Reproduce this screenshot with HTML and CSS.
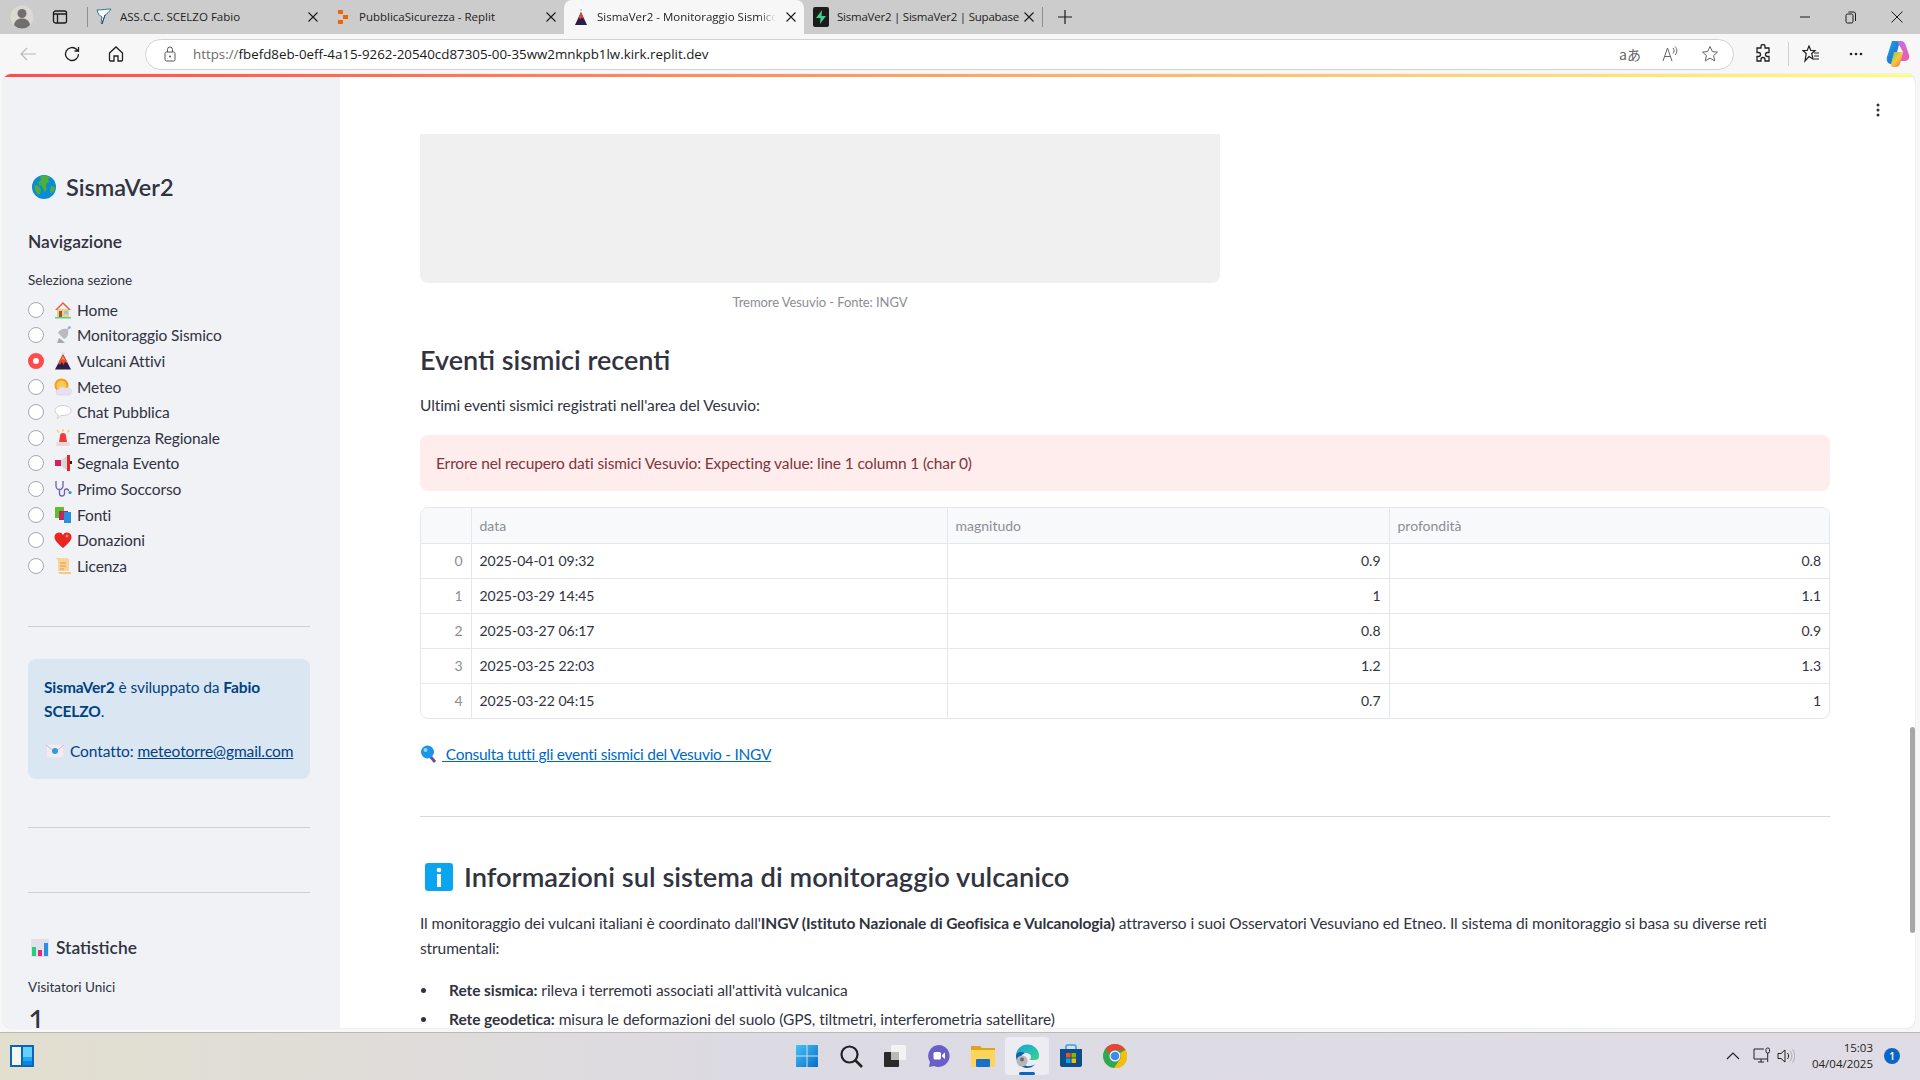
FILE: index.html
```html
<!DOCTYPE html>
<html>
<head>
    <title>SismaVer2 - Monitoraggio Sismico</title>
    <link rel="stylesheet" href="styles.css">
</head>
<body>
    <div class="tabstrip">
        <div class="profile">
            <svg width="24" height="24" viewBox="0 0 24 24"><circle cx="12" cy="12" r="11.500" fill="#dcd9d4"/><circle cx="12" cy="8.500" r="4.500" fill="#6f6f6f"/><path d="M4 20c1-5 4-6.500 8-6.500s7 1.500 8 6.500c-2 2.500-5 3.500-8 3.500s-6-1-8-3.500z" fill="#6f6f6f"/></svg>
        </div>
        <div class="tab-actions">
            <svg width="16" height="16" viewBox="0 0 16 16"><rect x="1.500" y="2" width="13" height="12" rx="2" fill="none" stroke="#1a1a1a" stroke-width="1.300"/><path d="M1.500 5h13M5.500 5v9" stroke="#1a1a1a" stroke-width="1.300"/></svg>
        </div>
        <div class="tab-sep first"></div>
        <div class="tab">
            <svg class="favicon" width="16" height="18" viewBox="0 0 16 18"><path d="M1 2c5 0 10-1 14-1-2 3-4 5-6 6l-3 9-1-1 1-6C4 8 2 6 1 2z" fill="#fff" stroke="#2f6f9f"/><path d="M9 7L6 16" stroke="#1f4f7f"/></svg>
            <span class="tab-title">ASS.C.C. SCELZO Fabio</span>
            <svg class="tab-close" width="10" height="10" viewBox="0 0 10 10"><path d="M0.500 0.500l9 9M9.500 0.500l-9 9" stroke="#1a1a1a" stroke-width="1.100"/></svg>
        </div>
        <div class="tab">
            <svg class="favicon" width="16" height="16" viewBox="0 0 16 16"><rect x="3" y="1" width="5" height="4" fill="#f26207"/><rect x="8" y="6" width="5" height="4" fill="#f26207"/><rect x="3" y="11" width="5" height="4" fill="#f26207"/></svg>
            <span class="tab-title">PubblicaSicurezza - Replit</span>
            <svg class="tab-close" width="10" height="10" viewBox="0 0 10 10"><path d="M0.500 0.500l9 9M9.500 0.500l-9 9" stroke="#1a1a1a" stroke-width="1.100"/></svg>
        </div>
        <div class="tab active">
            <svg class="favicon" width="16" height="18" viewBox="0 0 16 18"><path d="M8 4l6 13H2z" fill="#2b1d4a"/><path d="M8 4l3 7-2.500-1.500-1 2-1.500-2-1 1z" fill="#e4452e"/><path d="M7 1h2v2H7z" fill="#ccc"/></svg>
            <span class="tab-title">SismaVer2 - Monitoraggio Sismico</span>
            <svg class="tab-close" width="10" height="10" viewBox="0 0 10 10"><path d="M0.500 0.500l9 9M9.500 0.500l-9 9" stroke="#1a1a1a" stroke-width="1.100"/></svg>
        </div>
        <div class="tab">
            <svg class="favicon" width="16" height="20" viewBox="0 0 16 20"><rect width="16" height="20" rx="2" fill="#1c1c1c"/><path d="M9 3L3 11h4.500L7 17l6-8H8.500z" fill="#3ecf8e"/></svg>
            <span class="tab-title tight">SismaVer2 | SismaVer2 | Supabase</span>
            <svg class="tab-close" width="10" height="10" viewBox="0 0 10 10"><path d="M0.500 0.500l9 9M9.500 0.500l-9 9" stroke="#1a1a1a" stroke-width="1.100"/></svg>
        </div>
        <div class="tab-sep"></div>
        <svg class="new-tab" width="14" height="14" viewBox="0 0 14 14"><path d="M7 0v14M0 7h14" stroke="#1a1a1a" stroke-width="1.200"/></svg>
        <div class="window-controls">
            <div class="win-btn"><svg width="10" height="10" viewBox="0 0 10 10"><path d="M0 5h10" stroke="#1a1a1a"/></svg></div>
            <div class="win-btn"><svg width="12" height="14" viewBox="0 0 12 14"><rect x="1" y="4" width="7" height="9" rx="1.500" fill="none" stroke="#1a1a1a"/><path d="M3.500 2h5a2 2 0 0 1 2 2v7" fill="none" stroke="#1a1a1a"/></svg></div>
            <div class="win-btn"><svg width="12" height="12" viewBox="0 0 12 12"><path d="M0.500 0.500l11 11M11.500 0.500l-11 11" stroke="#1a1a1a"/></svg></div>
        </div>
    </div>

    <div class="toolbar">
        <div class="tool-btn"><svg width="18" height="18" viewBox="0 0 18 18"><path d="M17 9H2M8 3L2 9l6 6" fill="none" stroke="#b9b9b9" stroke-width="1.200"/></svg></div>
        <div class="tool-btn"><svg width="18" height="18" viewBox="0 0 18 18"><path d="M15.500 9a6.500 6.500 0 1 1-2-4.700L15.500 6V2M15.500 6h-4" fill="none" stroke="#1f1f1f" stroke-width="1.300"/></svg></div>
        <div class="tool-btn"><svg width="18" height="18" viewBox="0 0 18 18"><path d="M2.500 8L9 2l6.500 6v7a1 1 0 0 1-1 1H11v-5H7v5H3.500a1 1 0 0 1-1-1z" fill="none" stroke="#1f1f1f" stroke-width="1.300"/></svg></div>
        <div class="omnibox">
            <svg class="lock" width="16" height="16" viewBox="0 0 16 16"><rect x="3" y="6" width="10" height="9" rx="1.500" fill="none" stroke="#555"/><path d="M5.500 6V3.500a2.500 2.500 0 0 1 5 0V6" fill="none" stroke="#555"/><circle cx="8" cy="10.500" r="1" fill="#555"/></svg>
            <span class="url"><span class="url-scheme">https://</span>fbefd8eb-0eff-4a15-9262-20540cd87305-00-35ww2mnkpb1lw.kirk.replit.dev</span>
            <div class="omni-actions">
                <div class="omni-btn"><span class="translate-glyph">aあ</span></div>
                <div class="omni-btn"><svg width="18" height="18" viewBox="0 0 18 18"><path d="M2 16L6.500 3 11 16M3.500 11.500h6M12 3c1.500 1.500 1.500 4 0 5.500M14 1.500c2.500 2.500 2.500 6 0 8.500" fill="none" stroke="#666"/></svg></div>
                <div class="omni-btn"><svg width="18" height="18" viewBox="0 0 18 18"><path d="M9 1.500l2.300 5 5.200.600-3.900 3.500 1.100 5.300L9 13.200l-4.700 2.700 1.100-5.300L1.500 7.100l5.200-.600z" fill="none" stroke="#666"/></svg></div>
            </div>
        </div>
        <div class="tool-btn ext"><svg width="18" height="20" viewBox="0 0 18 20"><path d="M7 2.500a2 2 0 0 1 4 0V4h4v4.500h-1.500a2 2 0 0 0 0 4H15V17h-4v-1.500a2 2 0 0 0-4 0V17H3v-4.500h1.500a2 2 0 0 0 0-4H3V4h4z" fill="none" stroke="#1f1f1f" stroke-width="1.300"/></svg></div>
        <div class="tool-sep"></div>
        <div class="tool-btn fav"><svg width="18" height="20" viewBox="0 0 18 20"><path d="M7 2l1.800 4.500H13l-3.300 3L11 15l-4-2.500L3 17l1.200-7.500L1 6.500h4.200zM12 9h5M12 12h5M12 15h5" fill="none" stroke="#1f1f1f" stroke-width="1.200"/></svg></div>
        <div class="tool-btn more"><svg width="14" height="4" viewBox="0 0 14 4"><circle cx="2" cy="2" r="1.300" fill="#1f1f1f"/><circle cx="7" cy="2" r="1.300" fill="#1f1f1f"/><circle cx="12" cy="2" r="1.300" fill="#1f1f1f"/></svg></div>
        <div class="tool-btn copilot"><svg width="24" height="30" viewBox="0 0 24 30"><defs><linearGradient id="copA" x1="0" y1="0" x2="1" y2="1"><stop offset="0" stop-color="#19a7e8"/><stop offset="1" stop-color="#1d5fd0"/></linearGradient><linearGradient id="copB" x1="0" y1="0" x2="1" y2="1"><stop offset="0" stop-color="#c36bf0"/><stop offset="1" stop-color="#ef5fa0"/></linearGradient><linearGradient id="copC" x1="0" y1="0" x2="1" y2="1"><stop offset="0" stop-color="#76c93f"/><stop offset="0.500" stop-color="#f6c844"/><stop offset="1" stop-color="#f2603b"/></linearGradient></defs><path d="M6 2h8l-3 11-4 12H5c-3 0-5-3-4-7z" fill="url(#copA)"/><path d="M11 2h4c3 0 4 2 5 5l3 9c1 3-1 6-4 6h-5l3-9z" fill="url(#copB)"/><path d="M8 13h9l-3 12c-1 2-2 3-4 3H7c-2 0-3-2-2-3z" fill="url(#copC)"/></svg></div>
    </div>

    <div class="page">
        <div class="decoration"></div>
        <div class="page-body">
            <aside class="sidebar">
                <div class="brand">
                    <svg width="24" height="24" viewBox="0 0 24 24"><circle cx="12" cy="12" r="12" fill="#0a8bd6"/><path d="M8 1.500c3-1.500 7-1 10 1l-2 2.500 2 2-3 1-1 3 1 3-2 3-2-3-1-3-3-1-1-3 3-2z" fill="#4caf3a"/><path d="M2 10l5 1 2 4-1 4-2 1-3-5z" fill="#4caf3a"/><path d="M19 11l4 1-1 4-3 3-1-4z" fill="#4caf3a"/></svg>
                    <span>SismaVer2</span>
                </div>
                <h3 class="nav-title">Navigazione</h3>
                <div class="nav-label">Seleziona sezione</div>
                <ul class="radio-list">
                    <li class="radio-row"><span class="radio"></span><svg class="emoji" width="18" height="18" viewBox="0 0 18 18"><path d="M3 8h12v8H3z" fill="#f6c987"/><path d="M9 1L1 9h2l6-6 6 6h2z" fill="#ee5b3a"/><path d="M5 10h3v6H5z" fill="#8c5a3c"/><path d="M10 10h4v3h-4z" fill="#8ecae6"/><path d="M1 16h16v1.500H1z" fill="#4bd88f"/></svg>Home</li>
                    <li class="radio-row"><span class="radio"></span><svg class="emoji" width="18" height="18" viewBox="0 0 18 18"><path d="M4 7l6 6c3-1 5-4 4-9l2-3-1-.500-2 2.500C9 2 5 4 4 7z" fill="#b8bcc2"/><path d="M5 12l-2 5h8l-3-3z" fill="#a9a9a9"/><circle cx="15.500" cy="1.500" r="1.200" fill="#7fa8d8"/></svg>Monitoraggio Sismico</li>
                    <li class="radio-row checked"><span class="radio"></span><svg class="emoji" width="18" height="18" viewBox="0 0 18 18"><path d="M9 2l8 15.500H1z" fill="#2b1d4a"/><path d="M9 2l5 9.500-3-1.500-1.500 3-1.500-3-2 2.500-2-.500z" fill="#ee4a2d"/><path d="M9 4l2 4-2-1-2 1z" fill="#f7a13a"/><path d="M7.500 0h3v2.500h-3z" fill="#e8e4e0"/></svg>Vulcani Attivi</li>
                    <li class="radio-row"><span class="radio"></span><svg class="emoji" width="18" height="18" viewBox="0 0 18 18"><circle cx="7.500" cy="7.500" r="7" fill="#f59a1c"/><circle cx="7.500" cy="7.500" r="5" fill="#ffc94a"/><path d="M5 17a3 3 0 0 1 0-6c1-2.500 5-3 6.500-1 3-1 6 1 6 3.500S15 17 14 17z" fill="#e6e0f2" stroke="#cfc8de" stroke-width="0.500"/></svg>Meteo</li>
                    <li class="radio-row"><span class="radio"></span><svg class="emoji" width="18" height="18" viewBox="0 0 18 18"><path d="M9 2.500c4.500 0 8 2.200 8 5s-3.500 5-8 5H7l-3.500 3 .8-3.700C2.300 11 1 9.300 1 7.500c0-2.800 3.500-5 8-5z" fill="#fff" stroke="#cfcfcf"/></svg>Chat Pubblica</li>
                    <li class="radio-row"><span class="radio"></span><svg class="emoji" width="18" height="18" viewBox="0 0 18 18"><path d="M3 13h12l1 4H2z" fill="#e8d9d9"/><path d="M5 13l1-6a3 3 0 0 1 6 0l1 6z" fill="#ef3b3b"/><path d="M9 0v2.500M3 1l1.500 2.500M15 1l-1.500 2.500" stroke="#f7c948" stroke-width="1.300"/></svg>Emergenza Regionale</li>
                    <li class="radio-row"><span class="radio"></span><svg class="emoji" width="18" height="18" viewBox="0 0 18 18"><path d="M1 6h6v6H1z" fill="#d81e5b"/><path d="M7 6l6-4v14l-6-4z" fill="#d8d8dc"/><path d="M13 1h3v16h-3z" fill="#e8251f"/><path d="M16 7h2v3h-2z" fill="#222"/></svg>Segnala Evento</li>
                    <li class="radio-row"><span class="radio"></span><svg class="emoji" width="18" height="18" viewBox="0 0 18 18"><path d="M2 1v5a3.500 3.500 0 0 0 7 0V1M5.500 9.500v4a2.500 2.500 0 0 0 5 0V11a2 2 0 0 1 4 0" fill="none" stroke="#6a5fb0" stroke-width="1.300"/><circle cx="16" cy="12.500" r="1.600" fill="#2a8fe0"/></svg>Primo Soccorso</li>
                    <li class="radio-row"><span class="radio"></span><svg class="emoji" width="18" height="18" viewBox="0 0 18 18"><path d="M1 1h9v11H1z" fill="#5fbf2f"/><path d="M5 5h9v9H5z" fill="#b9295d"/><path d="M10 6h7v11h-7z" fill="#2a8fe0"/></svg>Fonti</li>
                    <li class="radio-row"><span class="radio"></span><svg class="emoji" width="18" height="18" viewBox="0 0 18 18"><path d="M9 17C3 12 .5 9 .5 6A4.500 4.500 0 0 1 9 4a4.500 4.500 0 0 1 8.500 2c0 3-2.500 6-8.500 11z" fill="#e8251f"/><circle cx="13" cy="5" r="1.500" fill="#f77"/></svg>Donazioni</li>
                    <li class="radio-row"><span class="radio"></span><svg class="emoji" width="18" height="18" viewBox="0 0 18 18"><path d="M1 1h11l3 1v12H4V3z" fill="#fbd39a"/><path d="M4 15h13v2H6z" fill="#f6c987"/><path d="M6 6h6M6 9h6M6 12h4" stroke="#e09a40"/></svg>Licenza</li>
                </ul>
                <hr class="side-rule first">
                <div class="info-box">
                    <p><strong>SismaVer2</strong> è sviluppato da <strong>Fabio SCELZO</strong>.</p>
                    <p class="contact"><svg class="emoji" width="18" height="14" viewBox="0 0 18 14"><rect width="18" height="14" rx="1" fill="#f1ebf3" stroke="#d5cbd8" stroke-width="0.500"/><path d="M0 1l9 7 9-7" fill="none" stroke="#c9bcd0"/><circle cx="9" cy="7" r="3" fill="#2a9fe0"/></svg> <span>Contatto: <a href="#">meteotorre@gmail.com</a></span></p>
                </div>
                <hr class="side-rule second">
                <hr class="side-rule third">
                <h3 class="stats-title"><svg width="18" height="18" viewBox="0 0 18 18"><rect width="18" height="18" rx="1" fill="#e3e0ea"/><path d="M1 8h4v9H1z" fill="#1fd080"/><path d="M7 11h4v6H7z" fill="#f0267a"/><path d="M13 4h4v13h-4z" fill="#2a8fe0"/></svg>Statistiche</h3>
                <div class="metric-label">Visitatori Unici</div>
                <div class="metric-value">1</div>
            </aside>

            <main class="content">
                <div class="menu-dots"><svg width="4" height="14" viewBox="0 0 4 14"><circle cx="2" cy="2" r="1.500" fill="#31333f"/><circle cx="2" cy="7" r="1.500" fill="#31333f"/><circle cx="2" cy="12" r="1.500" fill="#31333f"/></svg></div>
                <div class="image-placeholder"></div>
                <div class="caption">Tremore Vesuvio - Fonte: INGV</div>
                <h2 class="events-title">Eventi sismici recenti</h2>
                <p class="intro">Ultimi eventi sismici registrati nell'area del Vesuvio:</p>
                <div class="alert-error">Errore nel recupero dati sismici Vesuvio: Expecting value: line 1 column 1 (char 0)</div>
                <div class="table-wrap">
                    <table class="events">
                        <colgroup>
                            <col class="col-index">
                            <col class="col-data">
                            <col class="col-mag">
                            <col class="col-prof">
                        </colgroup>
                        <thead>
                            <tr><th></th><th>data</th><th>magnitudo</th><th>profondità</th></tr>
                        </thead>
                        <tbody>
                            <tr><td class="idx">0</td><td>2025-04-01 09:32</td><td class="num">0.9</td><td class="num">0.8</td></tr>
                            <tr><td class="idx">1</td><td>2025-03-29 14:45</td><td class="num">1</td><td class="num">1.1</td></tr>
                            <tr><td class="idx">2</td><td>2025-03-27 06:17</td><td class="num">0.8</td><td class="num">0.9</td></tr>
                            <tr><td class="idx">3</td><td>2025-03-25 22:03</td><td class="num">1.2</td><td class="num">1.3</td></tr>
                            <tr><td class="idx">4</td><td>2025-03-22 04:15</td><td class="num">0.7</td><td class="num">1</td></tr>
                        </tbody>
                    </table>
                </div>
                <a class="all-events" href="#"><svg width="22" height="18" viewBox="0 0 22 18"><path d="M10 11l5 6" stroke="#6a4fa0" stroke-width="3"/><circle cx="7.500" cy="7" r="6.500" fill="#1996e8"/><circle cx="5.500" cy="5" r="2" fill="#8fd3ff"/></svg>  Consulta tutti gli eventi sismici del Vesuvio - INGV</a>
                <hr class="main-rule">
                <h2 class="info-title"><svg width="28" height="28" viewBox="0 0 28 28"><rect width="28" height="28" rx="3" fill="#0aa5ee"/><circle cx="14" cy="7" r="2.300" fill="#fff"/><rect x="12" y="11" width="4" height="13" fill="#fff"/></svg>Informazioni sul sistema di monitoraggio vulcanico</h2>
                <p class="body-text">Il monitoraggio dei vulcani italiani è coordinato dall'<strong>INGV (Istituto Nazionale di Geofisica e Vulcanologia)</strong> attraverso i suoi Osservatori Vesuviano ed Etneo. Il sistema di monitoraggio si basa su diverse reti strumentali:</p>
                <ul class="net-list">
                    <li><strong>Rete sismica:</strong> rileva i terremoti associati all'attività vulcanica</li>
                    <li><strong>Rete geodetica:</strong> misura le deformazioni del suolo (GPS, tiltmetri, interferometria satellitare)</li>
                </ul>
            </main>
        </div>
        <div class="scroll-thumb"></div>
    </div>

    <div class="taskbar">
        <div class="task-left">
            <svg width="24" height="22" viewBox="0 0 24 22"><rect width="24" height="22" fill="#0a64b8"/><rect x="2" y="2" width="9" height="18" fill="#f4f4f4"/><rect x="13" y="2" width="9" height="10" fill="#66d0ff"/><rect x="13" y="12" width="9" height="4" fill="#22a7f0"/><rect x="13" y="16" width="9" height="4" fill="#0c87e0"/></svg>
        </div>
        <div class="task-icons">
            <div class="task-icon"><svg width="24" height="24" viewBox="0 0 24 24"><defs><linearGradient id="winG" x1="0" y1="0" x2="1" y2="1"><stop offset="0" stop-color="#42c4f5"/><stop offset="1" stop-color="#0a6cc9"/></linearGradient></defs><path d="M1 1h10.500v10.500H1zM12.500 1H23v10.500H12.500zM1 12.500h10.500V23H1zM12.500 12.500H23V23H12.500z" fill="url(#winG)"/></svg></div>
            <div class="task-icon"><svg width="24" height="24" viewBox="0 0 24 24"><circle cx="10.500" cy="10.500" r="8" fill="none" stroke="#222" stroke-width="2.200"/><path d="M16 16l7 7" stroke="#222" stroke-width="2.600"/></svg></div>
            <div class="task-icon"><svg width="24" height="24" viewBox="0 0 24 24"><rect x="8" y="1" width="15" height="15" rx="1" fill="#f3f3f3"/><rect x="1" y="8" width="15" height="15" rx="1" fill="#2a2a2a"/><rect x="8" y="8" width="8" height="8" fill="#b9b9b9"/></svg></div>
            <div class="task-icon"><svg width="24" height="24" viewBox="0 0 24 24"><path d="M12 1a11 11 0 1 1-5 21l-5 1 1-5A11 11 0 0 1 12 1z" fill="#6a5ec8"/><rect x="6.500" y="8" width="7.500" height="7.500" rx="1.500" fill="#fff"/><path d="M15 11l3-2.500v6.500l-3-2.500z" fill="#fff"/></svg></div>
            <div class="task-icon"><svg width="24" height="24" viewBox="0 0 24 24"><path d="M0 2h9l2 2h13v4H0z" fill="#e0a21a"/><path d="M0 6h24v17H0z" fill="#fcd55a"/><rect x="5" y="15" width="14" height="8" rx="1" fill="#1672c8"/></svg></div>
            <div class="task-icon current"><svg width="24" height="24" viewBox="0 0 24 24"><defs><linearGradient id="edgeG" x1="0" y1="0" x2="1" y2="1"><stop offset="0" stop-color="#1aa0e0"/><stop offset="1" stop-color="#38d58e"/></linearGradient></defs><path d="M1 12a11.500 11.500 0 0 1 23 0c0 3-2 4-4 4h-6c3-1 3-6-2-7C7 8 2 9 1 12z" fill="url(#edgeG)"/><path d="M1 12c0-4 6-5 9-3-3 1-4 3-4 6 0 4 4 8 9 7 2 0 4-1 5-2-2 3-5 4-8 4C6 24 1 18 1 12z" fill="#0f5faf"/><circle cx="7" cy="17" r="5.500" fill="#b7b7b7"/><circle cx="7" cy="15.500" r="2" fill="#6a6a6a"/></svg><span class="task-indicator"></span></div>
            <div class="task-icon"><svg width="24" height="24" viewBox="0 0 24 24"><path d="M7 6V3a2 2 0 0 1 2-2h6a2 2 0 0 1 2 2v3" fill="none" stroke="#2aa8e8" stroke-width="1.600"/><path d="M1 5h22v16a2 2 0 0 1-2 2H3a2 2 0 0 1-2-2z" fill="#0f4c8a"/><rect x="7" y="9" width="4.500" height="4.500" fill="#f25022"/><rect x="12.500" y="9" width="4.500" height="4.500" fill="#7fba00"/><rect x="7" y="14.500" width="4.500" height="4.500" fill="#00a4ef"/><rect x="12.500" y="14.500" width="4.500" height="4.500" fill="#ffb900"/></svg></div>
            <div class="task-icon"><svg width="24" height="24" viewBox="0 0 24 24"><circle cx="12" cy="12" r="12" fill="#2fa84f"/><path d="M12 0a12 12 0 0 1 10.400 6H12a6 6 0 0 0-5.700 4L2.600 4.500A12 12 0 0 1 12 0z" fill="#ea4335"/><path d="M22.400 6A12 12 0 0 1 11 24l5.500-8A6 6 0 0 0 17 9z" fill="#fbbc05"/><circle cx="12" cy="12" r="5.500" fill="#fff"/><circle cx="12" cy="12" r="4.300" fill="#4285f4"/></svg></div>
        </div>
        <div class="tray">
            <svg class="tray-chevron" width="14" height="8" viewBox="0 0 14 8"><path d="M1 7l6-6 6 6" fill="none" stroke="#222" stroke-width="1.200"/></svg>
            <svg class="tray-net" width="18" height="18" viewBox="0 0 18 18"><path d="M11 2H1v10h13M5 15h6M8 12v3" fill="none" stroke="#222"/><rect x="13" y="1" width="3.500" height="5" rx="1.500" fill="none" stroke="#222"/><path d="M14.700 6v9" stroke="#222"/></svg>
            <svg class="tray-sound" width="18" height="16" viewBox="0 0 18 16"><path d="M1 5.500h3L8 2v12L4 10.500H1z" fill="none" stroke="#222"/><path d="M10.500 5c1.500 2 1.500 4 0 6" fill="none" stroke="#222"/><path d="M13 3c2.500 3 2.500 7 0 10M15.500 1.500c3 4 3 9 0 13" fill="none" stroke="#aaa"/></svg>
            <div class="clock"><div>15:03</div><div>04/04/2025</div></div>
            <span class="badge">1</span>
        </div>
    </div>
</body>
</html>
```

FILE: styles.css
```css
* {
    box-sizing: border-box;
}

html, body {
    height: 100%;
}

body {
    margin: 0;
    display: flex;
    flex-direction: column;
    height: 100vh;
    overflow: hidden;
    background-color: #f7f7f7;
    font-family: "Open Sans", "Noto Sans", sans-serif;
    color: #1a1a1a;
}

/* browser tab strip */
.tabstrip {
    display: flex;
    align-items: center;
    height: 34px;
    flex-shrink: 0;
    background-color: #cccccc;
}

.profile {
    display: flex;
    align-items: center;
    justify-content: center;
    width: 44px;
}

.tab-actions {
    display: flex;
    justify-content: center;
    width: 32px;
}

.tab-sep {
    width: 1px;
    height: 20px;
    background-color: #8f8f8f;
}

.tab-sep.first {
    margin-left: 11px;
}

.tab {
    display: flex;
    align-items: center;
    width: 238px;
    height: 34px;
    padding: 0 8px 0 8px;
    font-size: 11.500px;
    color: #222;
}

.tab + .tab {
    border-left: 1px solid transparent;
}

.tab.active {
    background-color: #f7f7f7;
    border-radius: 8px 8px 0 0;
    width: 240px;
}

.favicon {
    flex-shrink: 0;
    margin-right: 8px;
}

.tab-title {
    flex: 1;
    padding-bottom: 1px;
    white-space: nowrap;
    overflow: hidden;
}

.tab-title.tight {
    letter-spacing: -0.230px;
}

.tab.active .tab-title {
    margin-right: 6px;
    -webkit-mask-image: linear-gradient(90deg, #000 90%, transparent);
    mask-image: linear-gradient(90deg, #000 90%, transparent);
}

.tab-close {
    margin-left: 4px;
    flex-shrink: 0;
}

.new-tab {
    margin-left: 15px;
}

.window-controls {
    display: flex;
    margin-left: auto;
}

.win-btn {
    display: flex;
    align-items: center;
    justify-content: center;
    width: 46px;
    height: 34px;
}

/* address bar row */
.toolbar {
    display: flex;
    align-items: center;
    height: 40px;
    flex-shrink: 0;
    padding-left: 6px;
    background-color: #f7f7f7;
}

.tool-btn {
    display: flex;
    align-items: center;
    justify-content: center;
    width: 44px;
    height: 32px;
    flex-shrink: 0;
}

.omnibox {
    display: flex;
    align-items: center;
    width: 1589px;
    height: 31px;
    margin-left: 7px;
    padding: 0 3px 0 16px;
    background-color: #fff;
    border: 1px solid #d2d2d2;
    border-radius: 16px;
    flex-shrink: 0;
}

.lock {
    margin-right: 15px;
}

.url {
    font-size: 13.350px;
    white-space: nowrap;
    color: #1a1a1a;
}

.url-scheme {
    color: #6b6b6b;
}

.omni-actions {
    display: flex;
    margin-left: auto;
}

.omni-btn {
    display: flex;
    align-items: center;
    justify-content: center;
    width: 40px;
    height: 29px;
}

.translate-glyph {
    font-size: 14px;
    color: #666;
    font-family: "Noto Sans CJK JP", sans-serif;
}

.tool-btn.ext,
.tool-btn.fav,
.tool-btn.more,
.tool-btn.copilot {
    width: 40px;
}

.tool-btn.ext {
    margin-left: 9px;
}

.tool-sep {
    width: 1px;
    height: 24px;
    margin-left: 5px;
    background-color: #d0d0d0;
    flex-shrink: 0;
}

.tool-btn.fav {
    margin-left: 2px;
}

.tool-btn.more {
    margin-left: 5px;
}

.tool-btn.copilot {
    margin-left: 2px;
}

/* the streamlit page */
.page {
    position: relative;
    display: flex;
    flex-direction: column;
    flex: 1;
    min-height: 0;
    margin: 0 5px 4px 3px;
    background-color: #fff;
    border-radius: 8px;
    overflow: hidden;
    box-shadow: 0 0 1px rgba(0, 0, 0, 0.3);
    font-family: "Lato", "Noto Sans", sans-serif;
    color: #31333f;
}

.decoration {
    height: 3px;
    flex-shrink: 0;
    background: linear-gradient(90deg, #ff4b4b, #fffd80);
}

.page-body {
    display: flex;
    flex: 1;
    min-height: 0;
}

.sidebar {
    width: 337px;
    flex-shrink: 0;
    padding: 94px 30px 0 25px;
    background-color: #f0f2f6;
    overflow: hidden;
}

.brand {
    display: flex;
    align-items: center;
    gap: 10px;
    height: 32px;
    padding-left: 4px;
    font-size: 23.500px;
    font-weight: 600;
}

.nav-title {
    margin: 27px 0 0;
    font-size: 17.400px;
    line-height: 23px;
    font-weight: 600;
}

.nav-label {
    margin-top: 17px;
    font-size: 13.500px;
    line-height: 20px;
}

.radio-list {
    margin: 7px 0 0;
    padding: 0;
    list-style: none;
}

.radio-row {
    display: flex;
    align-items: center;
    height: 25.600px;
    font-size: 15.500px;
    letter-spacing: -0.100px;
}

.radio {
    width: 16px;
    height: 16px;
    margin-right: 10px;
    border: 1px solid #a3a8b4;
    border-radius: 50%;
    background-color: #fff;
    flex-shrink: 0;
}

.radio-row.checked .radio {
    border: 5px solid #ff4b4b;
}

.emoji {
    flex-shrink: 0;
}

.radio-row .emoji {
    margin-right: 5px;
}

.side-rule {
    height: 1px;
    margin: 0;
    border: none;
    background-color: #cfd0d3;
}

.side-rule.first {
    margin-top: 47.500px;
}

.side-rule.second {
    margin-top: 48px;
}

.side-rule.third {
    margin-top: 64px;
}

.info-box {
    height: 120px;
    margin-top: 32px;
    padding: 16px 16px 0;
    background-color: #dbe6f3;
    border-radius: 8px;
    font-size: 15.500px;
    letter-spacing: -0.100px;
    line-height: 24px;
    color: #004280;
}

.info-box p {
    margin: 0;
}

.info-box .contact {
    display: flex;
    align-items: center;
    gap: 6px;
    margin-top: 16px;
    padding-left: 2px;
    white-space: nowrap;
}

.info-box a {
    color: #004280;
}

.stats-title {
    display: flex;
    align-items: center;
    gap: 7px;
    margin: 43px 0 0;
    padding-left: 3px;
    font-size: 17.400px;
    line-height: 24px;
    font-weight: 600;
}

.metric-label {
    margin-top: 17px;
    font-size: 13.500px;
    line-height: 20px;
}

.metric-value {
    margin-top: 1px;
    font-size: 30px;
    line-height: 44px;
}

.content {
    position: relative;
    flex: 1;
    min-width: 0;
    padding: 57px 85px 0 80px;
    overflow: hidden;
}

.menu-dots {
    position: absolute;
    top: 24px;
    right: 35px;
}

.image-placeholder {
    width: 800px;
    height: 149px;
    background-color: #f0f0f0;
    border-radius: 0 0 8px 8px;
}

.caption {
    width: 800px;
    margin-top: 9px;
    font-size: 13px;
    letter-spacing: -0.080px;
    line-height: 20px;
    text-align: center;
    color: #8c8d94;
}

.events-title {
    margin: 28px 0 0;
    font-size: 27px;
    line-height: 40px;
    font-weight: 600;
}

.intro {
    margin: 13px 0 0;
    font-size: 15.500px;
    letter-spacing: -0.080px;
    line-height: 24px;
}

.alert-error {
    margin-top: 18px;
    padding: 16px;
    background-color: #ffecec;
    border-radius: 8px;
    font-size: 15.500px;
    letter-spacing: -0.120px;
    line-height: 24px;
    color: #7d353b;
}

.table-wrap {
    margin-top: 16px;
    border: 1px solid #e6e7ea;
    border-radius: 8px;
    overflow: hidden;
}

.events {
    width: 100%;
    border-collapse: collapse;
    table-layout: fixed;
    font-size: 14px;
}

.col-index {
    width: 50px;
}

.col-data {
    width: 476px;
}

.col-mag {
    width: 442px;
}

.events th {
    height: 35px;
    padding: 0 8px;
    background-color: #f8f9fb;
    font-weight: 400;
    text-align: left;
    color: #8c8d94;
}

.events td {
    height: 35px;
    padding: 0 8px;
}

.events th,
.events td {
    border-left: 1px solid #e6e7ea;
    border-top: 1px solid #e6e7ea;
}

.events thead th {
    border-top: none;
}

.events th:first-child,
.events td:first-child {
    border-left: none;
}

.events .idx {
    text-align: right;
    color: #8c8d94;
}

.events .num {
    text-align: right;
}

.all-events {
    display: block;
    margin-top: 23px;
    font-size: 15.500px;
    letter-spacing: -0.270px;
    line-height: 24px;
    color: #0068c9;
}

.all-events svg {
    vertical-align: -3px;
}

.main-rule {
    height: 1px;
    margin: 50px 0 0;
    border: none;
    background-color: #d8d8da;
}

.info-title {
    display: flex;
    align-items: center;
    gap: 11px;
    margin: 40px 0 0;
    padding-left: 5px;
    font-size: 27.300px;
    line-height: 40px;
    font-weight: 600;
}

.body-text {
    margin: 14px 0 0;
    font-size: 15.500px;
    letter-spacing: -0.100px;
    line-height: 24.500px;
}

.net-list {
    margin: 16px 0 0;
    padding-left: 18px;
    font-size: 15.500px;
    letter-spacing: -0.060px;
    line-height: 28.500px;
}

.net-list li {
    padding-left: 11px;
}

.scroll-thumb {
    position: absolute;
    right: 0;
    top: 653px;
    width: 5px;
    height: 206px;
    background-color: #a6a6a6;
    border-radius: 3px;
}

/* windows taskbar */
.taskbar {
    display: flex;
    align-items: center;
    height: 48px;
    flex-shrink: 0;
    padding-bottom: 1px;
    border-top: 1px solid #b9b9b9;
    background: linear-gradient(90deg, #e2dfcf 0%, #dcdae3 40%, #dfdce6 100%);
    font-family: "Open Sans", "Noto Sans", sans-serif;
}

.task-left {
    display: flex;
    align-items: center;
    width: 785px;
    padding-left: 10px;
}

.task-icons {
    display: flex;
}

.task-icon {
    position: relative;
    display: flex;
    align-items: center;
    justify-content: center;
    width: 44px;
    height: 38px;
}

.task-icon.current {
    background-color: #eeecf3;
    border-radius: 4px;
}

.task-indicator {
    position: absolute;
    left: 14px;
    bottom: 0;
    width: 16px;
    height: 3px;
    background-color: #0a66c2;
    border-radius: 2px;
}

.tray {
    display: flex;
    align-items: center;
    margin-left: auto;
    padding-right: 20px;
}

.tray-net {
    margin-left: 13px;
}

.tray-sound {
    margin-left: 6px;
}

.clock {
    margin-left: 17px;
    font-size: 11.500px;
    line-height: 16px;
    text-align: right;
    color: #222;
}

.badge {
    display: flex;
    align-items: center;
    justify-content: center;
    width: 16px;
    height: 16px;
    margin-left: 11px;
    background-color: #0a66c2;
    border-radius: 50%;
    font-size: 10px;
    font-weight: 600;
    color: #fff;
}
```
